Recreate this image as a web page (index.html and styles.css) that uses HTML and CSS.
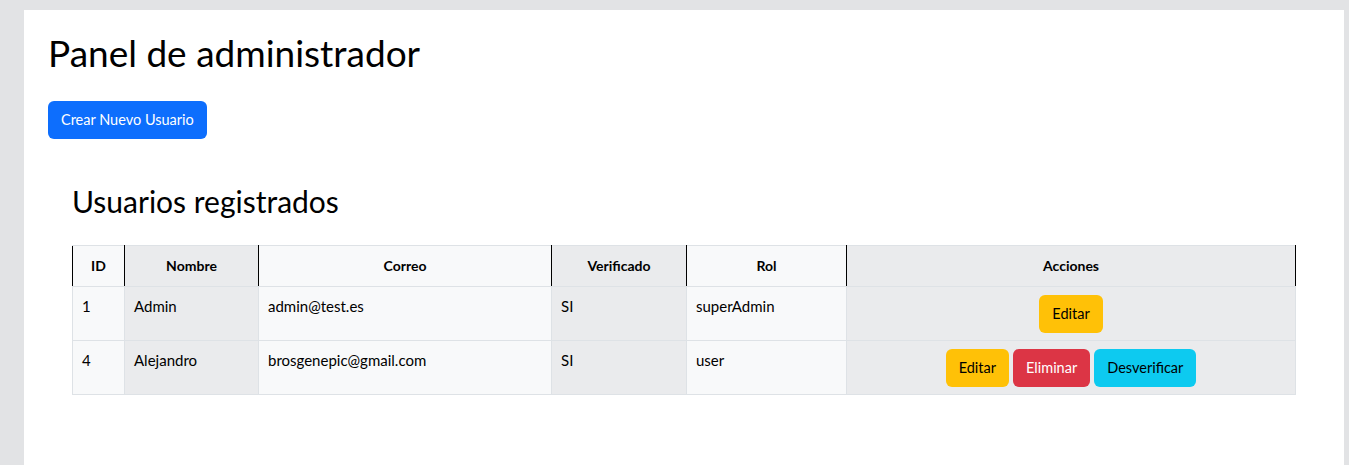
FILE: index.html
```html
<!DOCTYPE html>
<html lang="es">
<head>
<meta charset="utf-8">
<title>Panel de administrador</title>
<link rel="stylesheet" href="styles.css">
</head>
<body>
<main class="panel">
  <h1 class="title">Panel de administrador</h1>
  <button class="btn btn-primary">Crear Nuevo Usuario</button>
  <section class="users">
    <h2 class="subtitle">Usuarios registrados</h2>
    <table class="table">
      <colgroup>
        <col class="c-id"><col class="c-name"><col class="c-mail"><col class="c-ver"><col class="c-rol"><col class="c-act">
      </colgroup>
      <thead>
        <tr><th>ID</th><th>Nombre</th><th>Correo</th><th>Verificado</th><th>Rol</th><th>Acciones</th></tr>
      </thead>
      <tbody>
        <tr>
          <td>1</td><td>Admin</td><td>admin@test.es</td><td>SI</td><td>superAdmin</td>
          <td class="actions"><button class="btn btn-warning">Editar</button></td>
        </tr>
        <tr>
          <td>4</td><td>Alejandro</td><td>brosgenepic@gmail.com</td><td>SI</td><td>user</td>
          <td class="actions"><button class="btn btn-warning">Editar</button><button class="btn btn-danger">Eliminar</button><button class="btn btn-info">Desverificar</button></td>
        </tr>
      </tbody>
    </table>
  </section>
</main>
</body>
</html>
```

FILE: styles.css
```css
html, body {
  margin: 0;
  padding: 0;
}
body {
  background: #e2e3e5;
  font-family: "Lato", "Noto Sans", sans-serif;
  font-size: 15px;
  line-height: 1.5;
  color: #212529;
  height: 465px;
  overflow: hidden;
}
.panel {
  margin: 10px 0 0 24px;
  width: 1320px;
  box-sizing: border-box;
  min-height: 455px;
  background: #fff;
  padding: 21px 24px 24px;
}
.title {
  margin: 0 0 26px;
  font-size: 37px;
  font-weight: 400;
  line-height: 1.2;
  color: #000;
}
.btn {
  font-family: inherit;
  font-size: 14.5px;
  line-height: 24px;
  padding: 6px 12px;
  border: 1px solid transparent;
  border-radius: 6px;
  cursor: pointer;
}
.btn-primary { background: #0d6efd; color: #fff; }
.btn-warning { background: #ffc107; color: #000; }
.btn-danger { background: #dc3545; color: #fff; }
.btn-info { background: #0dcaf0; color: #000; }
.users {
  margin: 44px 24px 0;
}
.subtitle {
  margin: 0 0 26px;
  font-size: 30px;
  font-weight: 400;
  line-height: 1.2;
  color: #000;
}
.table {
  width: 100%;
  border-collapse: collapse;
  border: 1px solid #dee2e6;
}
.c-id { width: 52px; }
.c-name { width: 134px; }
.c-mail { width: 293px; }
.c-ver { width: 135px; }
.c-rol { width: 160px; }
.c-id, .c-mail, .c-rol { background: #f8f9fa; }
.c-name, .c-ver, .c-act { background: #eaebed; }
th, td {
  padding: 8px 9px;
  border: 1px solid #dee2e6;
  vertical-align: top;
  text-align: left;
  color: #000;
}
th {
  text-align: center;
  font-weight: 700;
  font-size: 14px;
  line-height: 24px;
  border-left: 1px solid #000;
  border-right: 1px solid #000;
}
td.actions {
  text-align: center;
  padding-bottom: 7px;
}
.actions .btn + .btn { margin-left: 4px; }
```
